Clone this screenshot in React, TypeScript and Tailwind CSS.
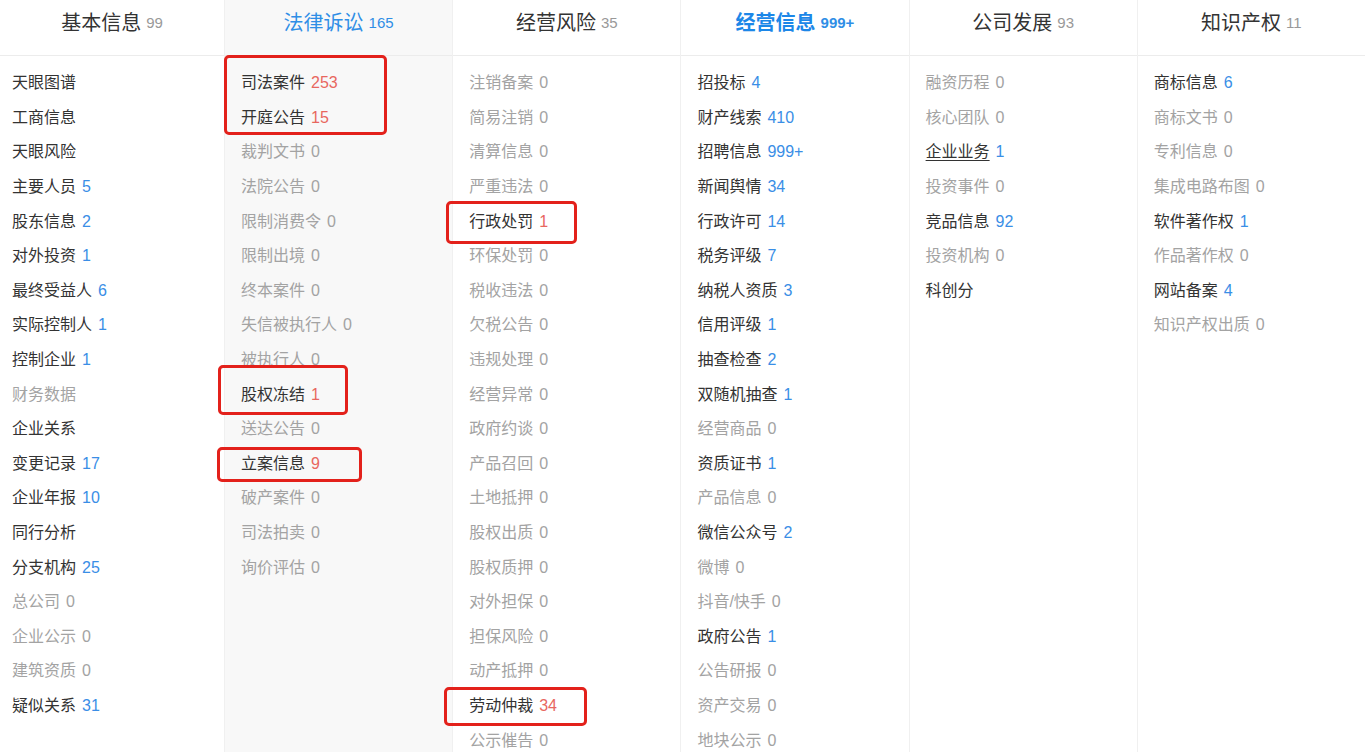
import React from "react";

type Tone = "dark" | "gray";
type Item = { name: string; count?: string; tone: Tone; num?: "blue" | "red"; underline?: boolean };

type Column = {
  title: string;
  total: string;
  active?: "light" | "bold";
  shaded?: boolean;
  items: Item[];
};

const d = (name: string, count?: string): Item => ({ name, count, tone: "dark", num: "blue" });
const r = (name: string, count: string): Item => ({ name, count, tone: "dark", num: "red" });
const g = (name: string, count?: string): Item => ({ name, count, tone: "gray" });

const columns: Column[] = [
  {
    title: "基本信息",
    total: "99",
    items: [
      d("天眼图谱"),
      d("工商信息"),
      d("天眼风险"),
      d("主要人员", "5"),
      d("股东信息", "2"),
      d("对外投资", "1"),
      d("最终受益人", "6"),
      d("实际控制人", "1"),
      d("控制企业", "1"),
      g("财务数据"),
      d("企业关系"),
      d("变更记录", "17"),
      d("企业年报", "10"),
      d("同行分析"),
      d("分支机构", "25"),
      g("总公司", "0"),
      g("企业公示", "0"),
      g("建筑资质", "0"),
      d("疑似关系", "31"),
    ],
  },
  {
    title: "法律诉讼",
    total: "165",
    active: "light",
    shaded: true,
    items: [
      r("司法案件", "253"),
      r("开庭公告", "15"),
      g("裁判文书", "0"),
      g("法院公告", "0"),
      g("限制消费令", "0"),
      g("限制出境", "0"),
      g("终本案件", "0"),
      g("失信被执行人", "0"),
      g("被执行人", "0"),
      r("股权冻结", "1"),
      g("送达公告", "0"),
      r("立案信息", "9"),
      g("破产案件", "0"),
      g("司法拍卖", "0"),
      g("询价评估", "0"),
    ],
  },
  {
    title: "经营风险",
    total: "35",
    items: [
      g("注销备案", "0"),
      g("简易注销", "0"),
      g("清算信息", "0"),
      g("严重违法", "0"),
      r("行政处罚", "1"),
      g("环保处罚", "0"),
      g("税收违法", "0"),
      g("欠税公告", "0"),
      g("违规处理", "0"),
      g("经营异常", "0"),
      g("政府约谈", "0"),
      g("产品召回", "0"),
      g("土地抵押", "0"),
      g("股权出质", "0"),
      g("股权质押", "0"),
      g("对外担保", "0"),
      g("担保风险", "0"),
      g("动产抵押", "0"),
      r("劳动仲裁", "34"),
      g("公示催告", "0"),
    ],
  },
  {
    title: "经营信息",
    total: "999+",
    active: "bold",
    items: [
      d("招投标", "4"),
      d("财产线索", "410"),
      d("招聘信息", "999+"),
      d("新闻舆情", "34"),
      d("行政许可", "14"),
      d("税务评级", "7"),
      d("纳税人资质", "3"),
      d("信用评级", "1"),
      d("抽查检查", "2"),
      d("双随机抽查", "1"),
      g("经营商品", "0"),
      d("资质证书", "1"),
      g("产品信息", "0"),
      d("微信公众号", "2"),
      g("微博", "0"),
      g("抖音/快手", "0"),
      d("政府公告", "1"),
      g("公告研报", "0"),
      g("资产交易", "0"),
      g("地块公示", "0"),
    ],
  },
  {
    title: "公司发展",
    total: "93",
    items: [
      g("融资历程", "0"),
      g("核心团队", "0"),
      { ...d("企业业务", "1"), underline: true },
      g("投资事件", "0"),
      d("竞品信息", "92"),
      g("投资机构", "0"),
      d("科创分"),
    ],
  },
  {
    title: "知识产权",
    total: "11",
    items: [
      d("商标信息", "6"),
      g("商标文书", "0"),
      g("专利信息", "0"),
      g("集成电路布图", "0"),
      d("软件著作权", "1"),
      g("作品著作权", "0"),
      d("网站备案", "4"),
      g("知识产权出质", "0"),
    ],
  },
];

// red annotation boxes drawn over the screenshot
const marks = [
  { left: 224, top: 55, width: 163, height: 80 },
  { left: 218, top: 365, width: 130, height: 50 },
  { left: 217, top: 447, width: 145, height: 35 },
  { left: 446, top: 201, width: 131, height: 43 },
  { left: 444, top: 687, width: 143, height: 39 },
];

function Header({ col }: { col: Column }) {
  const titleCls =
    col.active === "bold"
      ? "text-[#1c87e8] font-bold"
      : col.active === "light"
        ? "text-[#2f8ee6]"
        : "text-[#333]";
  const totalCls = col.active ? "text-[#2f8ee6]" : "text-[#999]";
  return (
    <div className="h-[56px] pb-[10px] flex items-center justify-center border-b border-[#ececec]">
      <span className={`text-[20px] ${titleCls}`}>{col.title}</span>
      <span className={`ml-[5px] text-[15px] mt-[2px] ${totalCls} ${col.active === "bold" ? "font-bold" : ""}`}>
        {col.total}
      </span>
    </div>
  );
}

function Row({ item }: { item: Item }) {
  const nameCls = item.tone === "dark" ? "text-[#333]" : "text-[#a3a3a3]";
  const numCls =
    item.tone === "gray" ? "text-[#a3a3a3]" : item.num === "red" ? "text-[#e8675f]" : "text-[#3a8ee6]";
  return (
    <div className="h-[34.6px] flex items-center whitespace-nowrap text-[16px]">
      <span className={`${nameCls} ${item.underline ? "underline underline-offset-[3px]" : ""}`}>{item.name}</span>
      {item.count && <span className={`ml-[6px] ${numCls}`}>{item.count}</span>}
    </div>
  );
}

export default function App() {
  return (
    <div
      className="relative w-[1365px] min-h-[752px] bg-white overflow-hidden"
      style={{ fontFamily: '"Liberation Sans", "Noto Sans CJK SC", sans-serif' }}
    >
      <div className="grid grid-cols-[224px_repeat(5,1fr)] min-h-[752px]">
        {columns.map((col, i) => (
          <div
            key={col.title}
            className={`${col.shaded ? "bg-[#f8f8f8]" : "bg-white"} ${i > 0 ? "border-l border-[#f0f0f0]" : ""}`}
          >
            <Header col={col} />
            <div className={`pt-[10px] ${i === 0 ? "pl-[12px]" : "pl-[16px]"}`}>
              {col.items.map((it) => (
                <Row key={it.name} item={it} />
              ))}
            </div>
          </div>
        ))}
      </div>
      {marks.map((m, i) => (
        <div
          key={i}
          className="absolute border-[3px] border-[#e3211b] rounded-[5px]"
          style={{ left: m.left, top: m.top, width: m.width, height: m.height }}
        />
      ))}
    </div>
  );
}
